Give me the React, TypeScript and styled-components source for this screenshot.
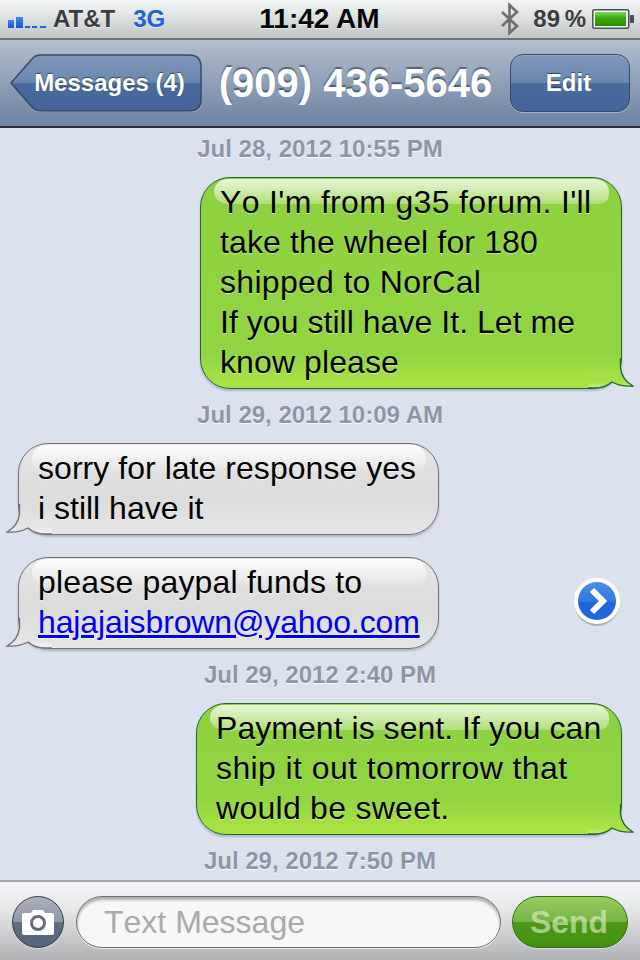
import styled, { createGlobalStyle } from "styled-components";

const GlobalStyle = createGlobalStyle`
  html, body {
    margin: 0;
    padding: 0;
    background: #dbe1ed;
  }
  * {
    box-sizing: border-box;
  }
`;

const Phone = styled.div`
  width: 640px;
  height: 960px;
  display: flex;
  flex-direction: column;
  overflow: hidden;
  font-family: "Liberation Sans", Arial, sans-serif;
`;

const StatusBar = styled.div`
  height: 40px;
  flex: none;
  display: grid;
  grid-template-columns: 1fr auto 1fr;
  align-items: center;
  padding: 0 6px 0 8px;
  background: linear-gradient(#f2f6f7 0, #e4e8e9 12px, #bfc4c5 38px);
  border-bottom: 2px solid #6f7377;
  color: #3b3c3e;
  font-size: 24px;
  font-weight: bold;
  text-shadow: 0 1px 0 rgba(255, 255, 255, 0.6);
`;

const StatusLeft = styled.div`
  display: flex;
  align-items: center;
`;

const StatusRight = styled.div`
  display: flex;
  align-items: center;
  justify-content: flex-end;
`;

const Carrier = styled.span`
  margin-left: 6px;
`;

const Network = styled.span`
  margin-left: 18px;
  color: #1a63d9;
`;

const Clock = styled.span`
  margin-right: 3px;
  font-size: 28px;
  color: #050505;
`;

const Percent = styled.span`
  margin: 0 6px 0 13px;
  word-spacing: -2px;
`;

const NavBar = styled.div`
  height: 88px;
  flex: none;
  display: flex;
  align-items: center;
  justify-content: space-between;
  padding: 0 10px;
  background: linear-gradient(#b3bece, #8f9fb7 50%, #6c83a2);
  border-bottom: 2px solid #2c3036;
`;

const BackButton = styled.div`
  position: relative;
  width: 192px;
  height: 58px;
  padding: 0 18px 0 25px;
  display: flex;
  align-items: center;
  justify-content: center;
`;

const BackShape = styled.svg`
  position: absolute;
  left: 0;
  top: 0;
`;

const NavLabel = styled.span`
  position: relative;
  color: #fff;
  font-size: 24px;
  font-weight: bold;
  white-space: nowrap;
  text-shadow: 0 -1px 1px rgba(0, 0, 0, 0.5);
`;

const Title = styled.div`
  margin-left: -1px;
  color: #fff;
  font-size: 40px;
  font-weight: bold;
  white-space: nowrap;
  text-shadow: 0 -2px 1px rgba(30, 40, 60, 0.55);
`;

const EditButton = styled.div`
  width: 120px;
  height: 58px;
  display: flex;
  align-items: center;
  justify-content: center;
  padding-right: 3px;
  border-radius: 13px;
  border: 1px solid #364a68;
  background: linear-gradient(#7f98b9, #6a88af 49%, #4a6c9b 50%, #44659a);
  box-shadow: 0 1px 0 rgba(255, 255, 255, 0.35), inset 0 1px 0 rgba(255, 255, 255, 0.15);
`;

const Thread = styled.div`
  flex: 1;
  display: flex;
  flex-direction: column;
  padding-top: 5px;
  overflow: hidden;
  background: #dbe1ed;
`;

const Stamp = styled.div<{ $after: number }>`
  height: 30px;
  line-height: 32px;
  margin-bottom: ${(p) => p.$after}px;
  text-align: center;
  color: #8d96a8;
  font-size: 24px;
  font-weight: bold;
  text-shadow: 0 1px 1px #fff;
`;

const Row = styled.div<{ $out?: boolean; $after: number }>`
  display: flex;
  align-items: center;
  justify-content: ${(p) => (p.$out ? "flex-end" : "space-between")};
  padding: ${(p) => (p.$out ? "0 18px 0 0" : "0 20px 0 18px")};
  margin-bottom: ${(p) => p.$after}px;
`;

const Bubble = styled.div<{ $out?: boolean; $width: number }>`
  position: relative;
  width: ${(p) => p.$width}px;
  padding: 4px 10px 6px 19px;
  border-radius: 30px;
  color: #000;
  font-size: 32px;
  font-kerning: none;
  line-height: 40px;
  border: 1px solid ${(p) => (p.$out ? "#1d6a28" : "#6f7175")};
  background: ${(p) =>
    p.$out
      ? "linear-gradient(#8ed140 0, #92d542 calc(100% - 34px), #a8e244 calc(100% - 6px))"
      : "linear-gradient(#e6e6e6 0, #dcdcdc 45px, #dddddd calc(100% - 30px), #e6e6e6 100%)"};
  box-shadow: 0 2px 2px rgba(90, 100, 120, 0.35);
  text-shadow: ${(p) =>
    p.$out ? "0 1px 1px rgba(235, 255, 190, 0.55)" : "0 1px 1px rgba(255, 255, 255, 0.5)"};
  white-space: nowrap;
`;

const Gloss = styled.div<{ $out?: boolean }>`
  position: absolute;
  top: 1px;
  left: 13px;
  right: 12px;
  height: ${(p) => (p.$out ? 25 : 27)}px;
  border-radius: 24px 24px 18px 24px / 22px 22px 16px 22px;
  background: ${(p) =>
    p.$out
      ? "linear-gradient(rgba(255,255,255,0.8), rgba(255,255,255,0.3))"
      : "linear-gradient(rgba(255,255,255,0.95), rgba(255,255,255,0.05))"};
`;

const BubbleText = styled.div`
  position: relative;
`;

const Line = styled.div<{ $track?: number }>`
  letter-spacing: ${(p) => p.$track ?? 0}px;
`;

const MailLink = styled.span`
  color: #0000ee;
  text-decoration: underline;
`;

const TailShape = styled.svg<{ $out?: boolean }>`
  position: absolute;
  bottom: -1px;
  ${(p) => (p.$out ? "right: -13px;" : "left: -13px; transform: scaleX(-1);")}
`;

const Disclosure = styled.svg`
  flex: none;
`;

const Composer = styled.div`
  height: 80px;
  flex: none;
  display: flex;
  align-items: center;
  padding: 1px 12px 0;
  background: linear-gradient(#f5f6f7, #e4e5e7 30px, #b0b2b6);
  border-top: 2px solid #a6a9ae;
`;

const CameraButton = styled.div`
  width: 52px;
  height: 52px;
  flex: none;
  margin-right: 12px;
  display: flex;
  align-items: center;
  justify-content: center;
  border-radius: 50%;
  border: 1px solid #363c45;
  background: linear-gradient(#acb2bc, #8e97a5 49%, #5f6e82 50%, #566579);
  box-shadow: 0 1px 0 rgba(255, 255, 255, 0.5);
`;

const MessageField = styled.div`
  flex: 1;
  height: 52px;
  display: flex;
  align-items: center;
  padding: 1px 26px 0 27px;
  border-radius: 26px;
  border: 1px solid #6d6e72;
  background: #f7f7f7;
  box-shadow: inset 0 3px 3px rgba(0, 0, 0, 0.3), 0 1px 0 rgba(255, 255, 255, 0.7);
  color: #aaaaaa;
  font-size: 32px;
  font-kerning: none;
`;

const SendButton = styled.div`
  width: 116px;
  height: 52px;
  flex: none;
  margin-left: 11px;
  display: flex;
  align-items: center;
  justify-content: center;
  padding: 1px 2px 0 0;
  border-radius: 26px;
  border: 1px solid #2f6e10;
  background: linear-gradient(#97cc62, #77b544 49%, #4f9a18 50%, #43900f);
  box-shadow: 0 1px 0 rgba(255, 255, 255, 0.5);
  color: rgba(226, 243, 210, 0.6);
  font-size: 32px;
  font-weight: bold;
`;

function SignalBars() {
  return (
    <svg width="39" height="24" viewBox="0 0 39 24">
      <defs>
        <linearGradient id="bar" x1="0" y1="0" x2="0" y2="1">
          <stop offset="0" stopColor="#3f8bf0" />
          <stop offset="1" stopColor="#0f55d0" />
        </linearGradient>
      </defs>
      <rect x="0" y="13" width="6" height="8" fill="url(#bar)" />
      <rect x="8" y="10" width="7" height="11" fill="url(#bar)" />
      <rect x="17" y="19" width="5" height="2" fill="#1a63d9" />
      <rect x="24" y="19" width="5" height="2" fill="#1a63d9" />
      <rect x="32" y="19" width="6" height="2" fill="#1a63d9" />
    </svg>
  );
}

function BluetoothIcon() {
  return (
    <svg width="20" height="34" viewBox="0 0 20 34">
      <path
        d="M2 10 L17 24 L9.5 31 V3 L17 10 L2 24"
        fill="none"
        stroke="#6e6f72"
        strokeWidth="2.6"
      />
    </svg>
  );
}

function BatteryIcon() {
  return (
    <svg width="42" height="20" viewBox="0 0 42 20">
      <defs>
        <linearGradient id="charge" x1="0" y1="0" x2="0" y2="1">
          <stop offset="0" stopColor="#7ed957" />
          <stop offset="0.45" stopColor="#3aa80a" />
          <stop offset="1" stopColor="#2c8c00" />
        </linearGradient>
      </defs>
      <rect x="0.75" y="0.75" width="36" height="18.5" rx="1.5" fill="#f0f2f2" stroke="#4b5058" strokeWidth="1.5" />
      <rect x="3" y="3" width="31" height="14" fill="url(#charge)" />
      <rect x="38" y="6" width="4" height="8" rx="1" fill="#4b5058" />
    </svg>
  );
}

function BackPlate() {
  return (
    <BackShape width="192" height="58" viewBox="0 0 192 58">
      <defs>
        <linearGradient id="plate" x1="0" y1="0" x2="0" y2="1">
          <stop offset="0" stopColor="#7f98b9" />
          <stop offset="0.49" stopColor="#6a88af" />
          <stop offset="0.5" stopColor="#4a6c9b" />
          <stop offset="1" stopColor="#44659a" />
        </linearGradient>
      </defs>
      <path
        d="M1 29 L22 5 Q25 1 31 1 H179 Q191 1 191 13 V45 Q191 57 179 57 H31 Q25 57 22 53 Z"
        fill="url(#plate)"
        stroke="#364a68"
        strokeWidth="1.5"
      />
      <path d="M22 55 Q25 58 31 58 H179 Q188 58 191 53" fill="none" stroke="rgba(255,255,255,0.3)" />
    </BackShape>
  );
}

function Tail({ out }: { out?: boolean }) {
  const id = out ? "tailOut" : "tailIn";
  const edge = out ? "#1d6a28" : "#6f7175";
  return (
    <TailShape $out={out} width="46" height="31" viewBox="0 0 46 31">
      <defs>
        <linearGradient id={id} x1="0" y1="0" x2="0" y2="1">
          <stop offset="0" stopColor={out ? "#96d742" : "#dddddd"} />
          <stop offset="0.8" stopColor={out ? "#a8e244" : "#e6e6e6"} />
          <stop offset="1" stopColor={out ? "#c8ef85" : "#f4f4f4"} />
        </linearGradient>
      </defs>
      <path
        d="M32.5 0 V10 Q34 22 45 28 Q33 29 24 24 Q17 30 7 30 H0 V0 Z"
        fill={`url(#${id})`}
      />
      <path
        d="M32.5 0 V10 Q34 22 45 28 Q33 29 24 24 Q17 30 7 30 H0"
        fill="none"
        stroke={edge}
        strokeWidth="1.4"
      />
    </TailShape>
  );
}

function DisclosureButton() {
  return (
    <Disclosure width="46" height="50" viewBox="0 0 46 50">
      <defs>
        <linearGradient id="disc" x1="0" y1="0" x2="0" y2="1">
          <stop offset="0" stopColor="#4a8ee8" />
          <stop offset="0.5" stopColor="#2f78e0" />
          <stop offset="0.55" stopColor="#1f66da" />
          <stop offset="1" stopColor="#2068dc" />
        </linearGradient>
      </defs>
      <circle cx="23" cy="26" r="22" fill="rgba(70,80,100,0.35)" />
      <circle cx="23" cy="23" r="23" fill="#fff" />
      <circle cx="23" cy="23" r="19" fill="url(#disc)" />
      <path d="M18 12 L29 23 L18 34" fill="none" stroke="#fff" strokeWidth="6" />
    </Disclosure>
  );
}

function CameraIcon() {
  return (
    <svg width="32" height="26" viewBox="0 0 32 26">
      <path
        d="M2 4 H9 L11 1 H21 L23 4 H30 Q32 4 32 6 V24 Q32 26 30 26 H2 Q0 26 0 24 V6 Q0 4 2 4 Z"
        fill="#fff"
      />
      <circle cx="16" cy="14" r="6.5" fill="none" stroke="#5f6e82" strokeWidth="3" />
    </svg>
  );
}

export default function App() {
  return (
    <>
      <GlobalStyle />
      <Phone>
        <StatusBar>
          <StatusLeft>
            <SignalBars />
            <Carrier>AT&amp;T</Carrier>
            <Network>3G</Network>
          </StatusLeft>
          <Clock>11:42 AM</Clock>
          <StatusRight>
            <BluetoothIcon />
            <Percent>89 %</Percent>
            <BatteryIcon />
          </StatusRight>
        </StatusBar>
        <NavBar>
          <BackButton>
            <BackPlate />
            <NavLabel>Messages (4)</NavLabel>
          </BackButton>
          <Title>(909) 436-5646</Title>
          <EditButton>
            <NavLabel>Edit</NavLabel>
          </EditButton>
        </NavBar>
        <Thread>
          <Stamp $after={14}>Jul 28, 2012 10:55 PM</Stamp>
          <Row $out $after={10}>
            <Bubble $out $width={422}>
              <Tail out />
              <Gloss $out />
              <BubbleText>
                <Line $track={0.33}>Yo I'm from g35 forum. I'll</Line>
                <Line $track={0.14}>take the wheel for 180</Line>
                <Line $track={0.3}>shipped to NorCal</Line>
                <Line $track={0.04}>If you still have It. Let me</Line>
                <Line $track={0.1}>know please</Line>
              </BubbleText>
            </Bubble>
          </Row>
          <Stamp $after={14}>Jul 29, 2012 10:09 AM</Stamp>
          <Row $after={22}>
            <Bubble $width={421}>
              <Tail />
              <Gloss />
              <BubbleText>
                <Line $track={0.04}>sorry for late response yes</Line>
                <Line>i still have it</Line>
              </BubbleText>
            </Bubble>
          </Row>
          <Row $after={10}>
            <Bubble $width={421}>
              <Tail />
              <Gloss />
              <BubbleText>
                <Line $track={0.18}>please paypal funds to</Line>
                <Line $track={-0.13}>
                  <MailLink>hajajaisbrown@yahoo.com</MailLink>
                </Line>
              </BubbleText>
            </Bubble>
            <DisclosureButton />
          </Row>
          <Stamp $after={14}>Jul 29, 2012 2:40 PM</Stamp>
          <Row $out $after={10}>
            <Bubble $out $width={426}>
              <Tail out />
              <Gloss $out />
              <BubbleText>
                <Line $track={0.04}>Payment is sent. If you can</Line>
                <Line $track={0.4}>ship it out tomorrow that</Line>
                <Line $track={0.27}>would be sweet.</Line>
              </BubbleText>
            </Bubble>
          </Row>
          <Stamp $after={0}>Jul 29, 2012 7:50 PM</Stamp>
        </Thread>
        <Composer>
          <CameraButton>
            <CameraIcon />
          </CameraButton>
          <MessageField>Text Message</MessageField>
          <SendButton>Send</SendButton>
        </Composer>
      </Phone>
    </>
  );
}
